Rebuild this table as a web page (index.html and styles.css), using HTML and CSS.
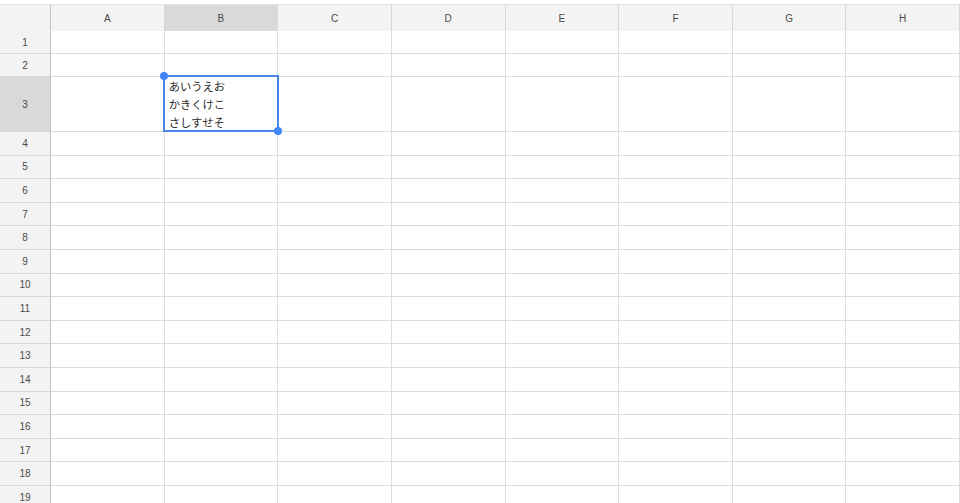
FILE: index.html
```html
<!DOCTYPE html>
<html lang="ja">
<head>
<meta charset="utf-8">
<title>Sheet</title>
<link rel="stylesheet" href="styles.css">
</head>
<body>
<div class="sheet">
  <div class="corner"></div>
  <div class="ch">A</div><div class="ch sel">B</div><div class="ch">C</div><div class="ch">D</div><div class="ch">E</div><div class="ch">F</div><div class="ch">G</div><div class="ch">H</div>

  <div class="rh">1</div><div class="c"></div><div class="c"></div><div class="c"></div><div class="c"></div><div class="c"></div><div class="c"></div><div class="c"></div><div class="c"></div>
  <div class="rh">2</div><div class="c"></div><div class="c"></div><div class="c"></div><div class="c"></div><div class="c"></div><div class="c"></div><div class="c"></div><div class="c"></div>
  <div class="rh sel">3</div><div class="c"></div>
  <div class="c active">
    <div class="txt">あいうえお<br>かきくけこ<br>さしすせそ</div>
    <div class="selbox"><span class="h tl"></span><span class="h br"></span></div>
  </div>
  <div class="c"></div><div class="c"></div><div class="c"></div><div class="c"></div><div class="c"></div><div class="c"></div>
  <div class="rh">4</div><div class="c"></div><div class="c"></div><div class="c"></div><div class="c"></div><div class="c"></div><div class="c"></div><div class="c"></div><div class="c"></div>
  <div class="rh">5</div><div class="c"></div><div class="c"></div><div class="c"></div><div class="c"></div><div class="c"></div><div class="c"></div><div class="c"></div><div class="c"></div>
  <div class="rh">6</div><div class="c"></div><div class="c"></div><div class="c"></div><div class="c"></div><div class="c"></div><div class="c"></div><div class="c"></div><div class="c"></div>
  <div class="rh">7</div><div class="c"></div><div class="c"></div><div class="c"></div><div class="c"></div><div class="c"></div><div class="c"></div><div class="c"></div><div class="c"></div>
  <div class="rh">8</div><div class="c"></div><div class="c"></div><div class="c"></div><div class="c"></div><div class="c"></div><div class="c"></div><div class="c"></div><div class="c"></div>
  <div class="rh">9</div><div class="c"></div><div class="c"></div><div class="c"></div><div class="c"></div><div class="c"></div><div class="c"></div><div class="c"></div><div class="c"></div>
  <div class="rh">10</div><div class="c"></div><div class="c"></div><div class="c"></div><div class="c"></div><div class="c"></div><div class="c"></div><div class="c"></div><div class="c"></div>
  <div class="rh">11</div><div class="c"></div><div class="c"></div><div class="c"></div><div class="c"></div><div class="c"></div><div class="c"></div><div class="c"></div><div class="c"></div>
  <div class="rh">12</div><div class="c"></div><div class="c"></div><div class="c"></div><div class="c"></div><div class="c"></div><div class="c"></div><div class="c"></div><div class="c"></div>
  <div class="rh">13</div><div class="c"></div><div class="c"></div><div class="c"></div><div class="c"></div><div class="c"></div><div class="c"></div><div class="c"></div><div class="c"></div>
  <div class="rh">14</div><div class="c"></div><div class="c"></div><div class="c"></div><div class="c"></div><div class="c"></div><div class="c"></div><div class="c"></div><div class="c"></div>
  <div class="rh">15</div><div class="c"></div><div class="c"></div><div class="c"></div><div class="c"></div><div class="c"></div><div class="c"></div><div class="c"></div><div class="c"></div>
  <div class="rh">16</div><div class="c"></div><div class="c"></div><div class="c"></div><div class="c"></div><div class="c"></div><div class="c"></div><div class="c"></div><div class="c"></div>
  <div class="rh">17</div><div class="c"></div><div class="c"></div><div class="c"></div><div class="c"></div><div class="c"></div><div class="c"></div><div class="c"></div><div class="c"></div>
  <div class="rh">18</div><div class="c"></div><div class="c"></div><div class="c"></div><div class="c"></div><div class="c"></div><div class="c"></div><div class="c"></div><div class="c"></div>
  <div class="rh">19</div><div class="c"></div><div class="c"></div><div class="c"></div><div class="c"></div><div class="c"></div><div class="c"></div><div class="c"></div><div class="c"></div>
</div>
</body>
</html>
```

FILE: styles.css
```css
html, body {
  margin: 0;
  padding: 0;
  background: #ffffff;
  overflow: hidden;
}
body {
  padding-top: 4px;
  font-family: "Liberation Sans", Arial, "Noto Sans CJK JP", sans-serif;
}
.sheet {
  display: grid;
  grid-template-columns: 51px repeat(8, 113.625px);
  grid-template-rows: 27px 23px 23px 55px repeat(16, 23.6px);
  width: 960px;
}
.sheet > div {
  box-sizing: border-box;
}
.corner {
  background: #f3f3f3;
  border-top: 1px solid #e4e4e4;
  border-right: 1px solid #c4c4c4;
}
.ch {
  background: #f3f3f3;
  border-top: 1px solid #e4e4e4;
  border-right: 1px solid #d8d8d8;
  display: flex;
  align-items: center;
  justify-content: center;
  font-size: 10px;
  color: #4a4a4a;
}
.ch.sel {
  background: #d9d9d9;
}
.rh {
  background: #f3f3f3;
  border-right: 1px solid #c4c4c4;
  border-bottom: 1px solid #d8d8d8;
  display: flex;
  align-items: center;
  justify-content: center;
  font-size: 10px;
  color: #4a4a4a;
}
.rh.sel {
  background: #d9d9d9;
}
.c {
  background: #ffffff;
  border-right: 1px solid #dcdcdc;
  border-bottom: 1px solid #dcdcdc;
}
.active {
  position: relative;
}
.txt {
  padding: 0 0 0 4px;
  font-family: "Noto Sans CJK JP", sans-serif;
  font-size: 11.3px;
  line-height: 18px;
  color: #2a2a2a;
}
.selbox {
  position: absolute;
  left: -2px;
  top: -2px;
  right: -2px;
  bottom: -1px;
  border: 2px solid #4a86e8;
  pointer-events: none;
}
.h {
  position: absolute;
  width: 8px;
  height: 8px;
  border-radius: 50%;
  background: #4285f4;
}
.h.tl {
  left: -5px;
  top: -5px;
}
.h.br {
  right: -5px;
  bottom: -5px;
}
```
